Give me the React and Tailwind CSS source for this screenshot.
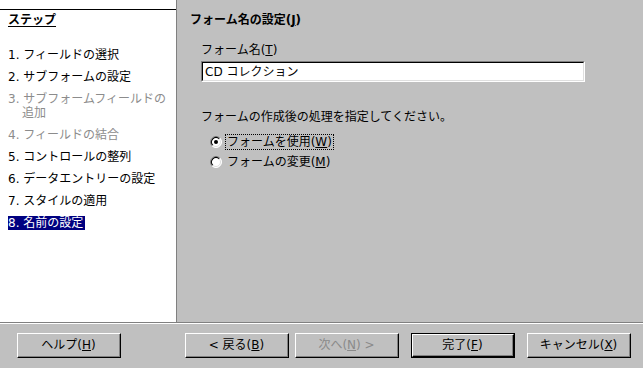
import React from "react";

const font = { fontFamily: '"DejaVu Sans", "Noto Sans CJK JP", sans-serif' };

function Btn({ children, w = "w-[104px]", def = false, disabled = false, className = "" }) {
  const inner = (
    <div className="flex h-full w-full items-center justify-center border-t border-l border-t-white border-l-white border-b border-r border-b-black border-r-black">
      <div className={`flex h-full w-full items-center justify-center border-b border-r border-b-[#808080] border-r-[#808080] text-[12px] leading-[14px] ${disabled ? "text-[#8a8a8a]" : "text-black"}`}>
        {children}
      </div>
    </div>
  );
  if (def) {
    return <div className={`h-[25px] ${w} border border-black ${className}`}>{inner}</div>;
  }
  return <div className={`h-[25px] ${w} ${className}`}>{inner}</div>;
}

function Radio({ checked }) {
  return (
    <svg width="12" height="12" viewBox="0 0 12 12" className="shrink-0">
      <circle cx="6" cy="6" r="5.5" fill="#ffffff" />
      <path d="M2.1 9.9 A5.5 5.5 0 0 1 9.9 2.1" fill="none" stroke="#808080" strokeWidth="1" />
      <path d="M9.9 2.1 A5.5 5.5 0 0 1 2.1 9.9" fill="none" stroke="#ffffff" strokeWidth="1" />
      <path d="M2.8 9.2 A4.5 4.5 0 0 1 9.2 2.8" fill="none" stroke="#000000" strokeWidth="1.2" />
      <path d="M9.2 2.8 A4.5 4.5 0 0 1 2.8 9.2" fill="none" stroke="#dfdfdf" strokeWidth="1" />
      {checked && <circle cx="6" cy="6" r="2" fill="#000000" />}
    </svg>
  );
}

export default function App() {
  const steps = [
    { t: "1. フィールドの選択" },
    { t: "2. サブフォームの設定" },
    { t: "3. サブフォームフィールドの", t2: "追加", dis: true },
    { t: "4. フィールドの結合", dis: true },
    { t: "5. コントロールの整列" },
    { t: "6. データエントリーの設定" },
    { t: "7. スタイルの適用" },
    { t: "8. 名前の設定", sel: true },
  ];
  return (
    <div className="flex h-[368px] w-[643px] flex-col bg-[#c0c0c0] text-[12px] leading-[14px] text-black" style={font}>
      <div className="flex h-[322px]">
        <div className="w-[177px] shrink-0 border-r border-r-[#808080] bg-white">
          <div className="mt-[9px] h-px w-[176px] bg-black" />
          <div className="pl-[8px] pt-[3px]">
            <div className="font-bold underline underline-offset-2">ステップ</div>
            <div className="mt-[21px] flex flex-col gap-[8px]">
              {steps.map((s, i) => (
                <div key={i} className={s.dis ? "text-[#8c8c8c]" : ""}>
                  {s.sel ? (
                    <span className="bg-[#000080] pr-[2px] text-white">{s.t}</span>
                  ) : (
                    <span>{s.t}</span>
                  )}
                  {s.t2 && <div className="pl-[14px]">{s.t2}</div>}
                </div>
              ))}
            </div>
          </div>
        </div>
        <div className="flex-1 pl-[13px] pt-[13px]">
          <div className="font-bold">
            フォーム名の設定(<u>J</u>)
          </div>
          <div className="pl-[11px]">
            <div className="mt-[16px]">
              フォーム名(<u>T</u>)
            </div>
            <div className="mt-[4px] h-[21px] w-[384px] border-t border-l border-t-[#808080] border-l-[#808080] border-b border-r border-b-white border-r-white">
              <div className="flex h-full w-full items-center border-t border-l border-t-black border-l-black border-b border-r border-b-[#dfdfdf] border-r-[#dfdfdf] bg-white pl-[2px]">
                CD コレクション
              </div>
            </div>
            <div className="mt-[28px]">フォームの作成後の処理を指定してください。</div>
            <div className="mt-[10px] flex items-center pl-[9px]">
              <Radio checked />
              <span className="ml-[3px] border border-dotted border-black px-[1px]">
                フォームを使用(<u>W</u>)
              </span>
            </div>
            <div className="mt-[4px] flex items-center pl-[9px]">
              <Radio />
              <span className="ml-[3px] border border-transparent px-[1px]">
                フォームの変更(<u>M</u>)
              </span>
            </div>
          </div>
        </div>
      </div>
      <div className="h-px bg-[#808080]" />
      <div className="h-px bg-white" />
      <div className="flex pl-[17px] pt-[9px]">
        <Btn>
          ヘルプ(<u>H</u>)
        </Btn>
        <Btn className="ml-[64px]">
          &lt; 戻る(<u>B</u>)
        </Btn>
        <Btn className="ml-[6px]" disabled>
          次へ(<u>N</u>) &gt;
        </Btn>
        <Btn className="ml-[12px]" def w="w-[104px]">
          完了(<u>F</u>)
        </Btn>
        <Btn className="ml-[12px]">
          キャンセル(<u>X</u>)
        </Btn>
      </div>
    </div>
  );
}
